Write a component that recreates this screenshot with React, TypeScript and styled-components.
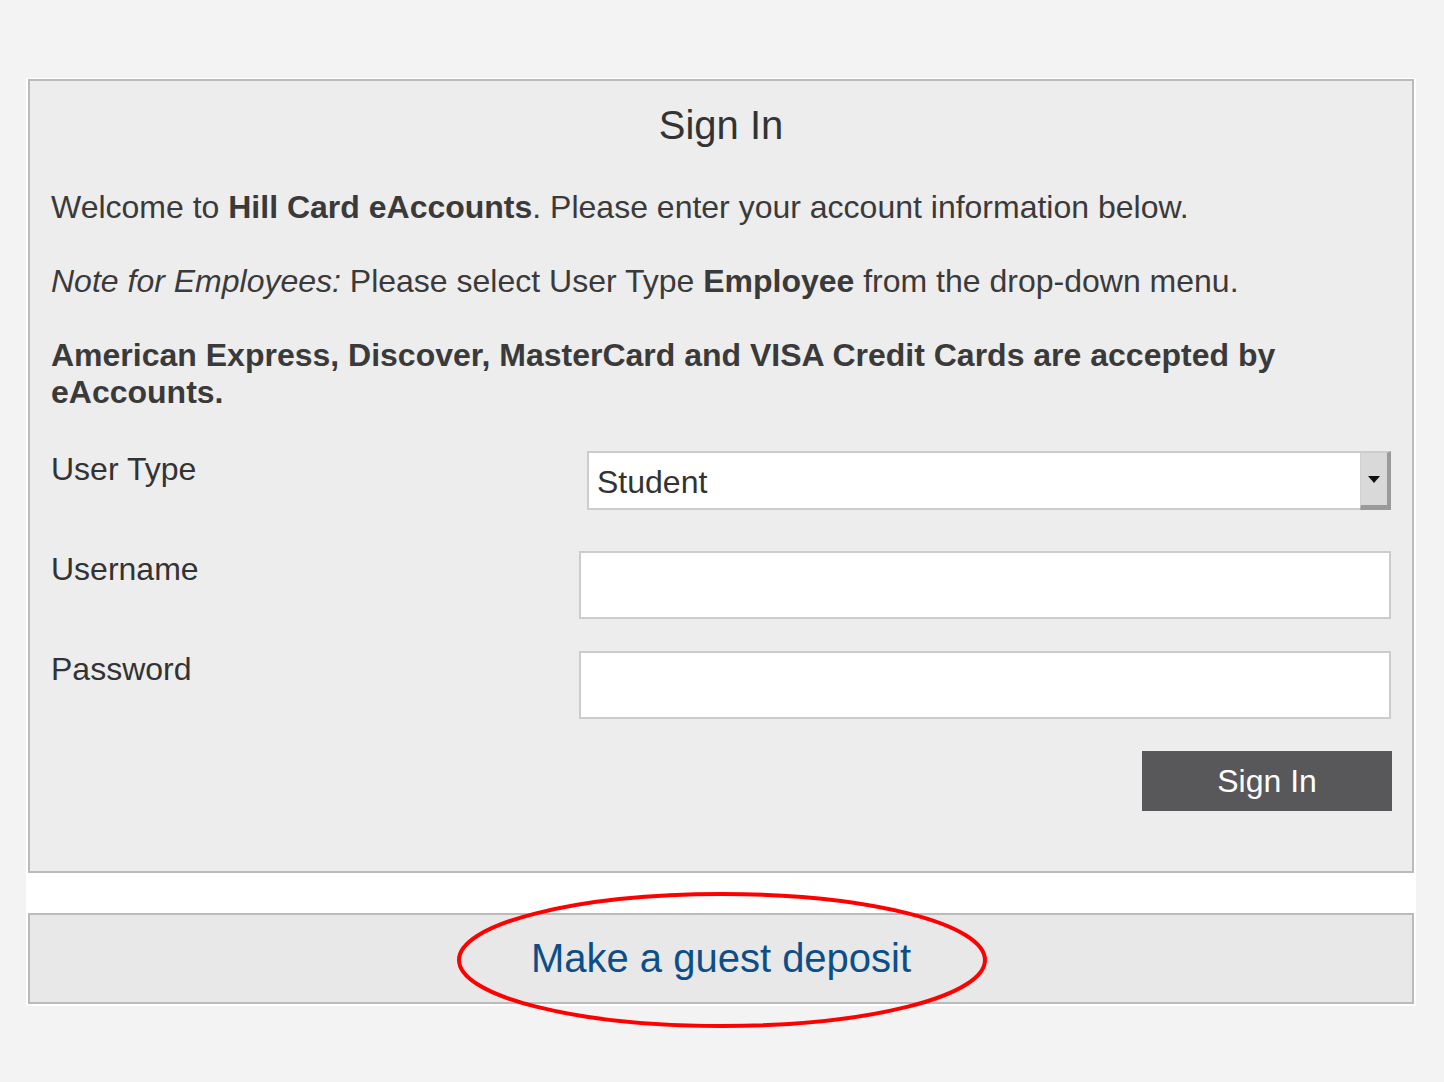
import React from 'react';
import styled, { createGlobalStyle } from 'styled-components';

const GlobalStyle = createGlobalStyle`
  html, body {
    margin: 0;
    padding: 0;
    background: #f3f3f3;
  }
  body {
    font-family: 'Liberation Sans', Arial, Helvetica, sans-serif;
    color: #333;
  }
`;

const Page = styled.div`
  min-height: 100vh;
  padding: 78px 0 0 26px;
  box-sizing: border-box;
`;
const Wrapper = styled.div`
  width: 1390px;
  box-sizing: border-box;
  background: #fff;
  padding: 1px 2px 2px;
  display: flex;
  flex-direction: column;
  gap: 40px;
`;
const Card = styled.section<{ $tone?: string }>`
  position: relative;
  border: 2px solid #bbb;
  background: ${p => p.$tone || '#ededed'};
`;
const SignInCard = styled(Card)`
  padding: 21px 21px 60px;
`;
const Title = styled.h1`
  margin: 0 0 41px;
  font-size: 40px;
  line-height: 46px;
  font-weight: 400;
  text-align: center;
  color: #333;
`;
const Para = styled.p`
  margin: 0 0 37px;
  font-size: 32px;
  line-height: 37px;
  color: #3a3a3a;
  &:last-of-type {
    margin-bottom: 40px;
  }
`;
const Form = styled.form`
  display: grid;
  grid-template-columns: 528px 1fr;
  row-gap: 32px;
  margin: 0;
`;
const Label = styled.label`
  font-size: 32px;
  line-height: 37px;
  color: #333;
  min-height: 68px;
`;
const SelectBox = styled.div`
  position: relative;
  margin-left: 8px;
  height: 59px;
  box-sizing: border-box;
  border: 2px solid #ccc;
  background: #fff;
`;
const NativeSelect = styled.select`
  appearance: none;
  width: 100%;
  height: 100%;
  border: 0;
  outline: none;
  background: transparent;
  font-family: inherit;
  font-size: 32px;
  color: #333;
  padding: 2px 0 0 8px;
  margin: 0;
`;
const ArrowButton = styled.span`
  position: absolute;
  top: -2px;
  right: -2px;
  width: 31px;
  height: 59px;
  box-sizing: border-box;
  background: #d9d9d9;
  border-top: 2px solid #ccc;
  border-left: 1px solid #d0d0d0;
  border-right: 4px solid #9a9a9a;
  border-bottom: 5px solid #9a9a9a;
  display: flex;
  align-items: center;
  justify-content: center;
  pointer-events: none;
`;
const TextInput = styled.input`
  height: 68px;
  box-sizing: border-box;
  border: 2px solid #ccc;
  background: #fff;
  font-size: 32px;
  padding: 0 10px;
  outline: none;
  width: 100%;
`;
const Actions = styled.div`
  grid-column: 1 / -1;
  display: flex;
  justify-content: flex-end;
  margin-right: -1px;
`;
const SubmitButton = styled.button`
  width: 250px;
  height: 60px;
  border: 0;
  background: #58585a;
  color: #fff;
  font-family: inherit;
  font-size: 32px;
  cursor: pointer;
`;
const GuestCard = styled(Card)`
  padding: 20px 0 21px;
  text-align: center;
`;
const GuestLink = styled.a`
  font-size: 40px;
  line-height: 46px;
  color: #0c4f88;
  text-decoration: none;
`;
const Highlight = styled.svg`
  position: absolute;
  left: 426px;
  top: -24px;
  overflow: visible;
  pointer-events: none;
`;

const App = () => (
  <>
    <GlobalStyle />
    <Page>
      <Wrapper>
        <SignInCard>
          <Title>Sign In</Title>
          <Para>
            Welcome to <b>Hill Card eAccounts</b>. Please enter your account information below.
          </Para>
          <Para>
            <i>Note for Employees:</i> Please select User Type <b>Employee</b> from the drop-down menu.
          </Para>
          <Para>
            <b>American Express, Discover, MasterCard and VISA Credit Cards are accepted by eAccounts.</b>
          </Para>

          <Form onSubmit={e => e.preventDefault()}>
            <Label htmlFor='usertype'>User Type</Label>
            <div>
              <SelectBox>
                <NativeSelect id='usertype' defaultValue='student'>
                  <option value='student'>Student</option>
                  <option value='employee'>Employee</option>
                </NativeSelect>
                <ArrowButton>
                  <svg width='12' height='7' viewBox='0 0 12 7'>
                    <path d='M0 0 H12 L6 7 Z' fill='#111' />
                  </svg>
                </ArrowButton>
              </SelectBox>
            </div>

            <Label htmlFor='username'>Username</Label>
            <TextInput id='username' type='text' />

            <Label htmlFor='password'>Password</Label>
            <TextInput id='password' type='password' />

            <Actions>
              <SubmitButton type='submit'>Sign In</SubmitButton>
            </Actions>
          </Form>
        </SignInCard>

        <GuestCard $tone='#e8e8e8'>
          <GuestLink href='#'>Make a guest deposit</GuestLink>
          <Highlight width='532' height='138' viewBox='0 0 532 138'>
            <ellipse cx='266' cy='69' rx='263' ry='66' fill='none' stroke='#f00' strokeWidth='4' />
          </Highlight>
        </GuestCard>
      </Wrapper>
    </Page>
  </>
);

export default App;
